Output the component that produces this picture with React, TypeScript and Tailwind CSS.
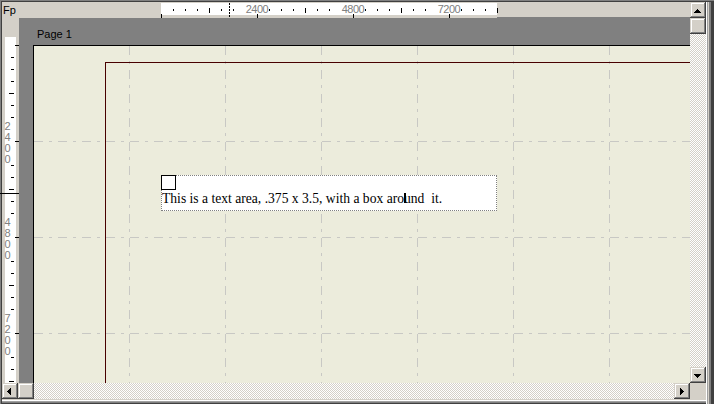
import React from "react";

const bevel =
  "bg-[#d4d0c8] shadow-[inset_-1px_-1px_#404040,inset_1px_1px_#d4d0c8,inset_-2px_-2px_#808080,inset_2px_2px_#ffffff]";
const checker =
  "bg-[image:conic-gradient(#d4d0c8_25%,#ffffff_0_50%,#d4d0c8_0_75%,#ffffff_0)] bg-[length:2px_2px]";

type Dir = "up" | "down" | "left" | "right";

function Arrow({ dir }: { dir: Dir }) {
  const rects: React.ReactNode[] = [];
  for (let r = 0; r < 4; r++) {
    if (dir === "up") rects.push(<rect key={r} x={7 - r} y={7 + r} width={1 + 2 * r} height={1} />);
    if (dir === "down") rects.push(<rect key={r} x={4 + r} y={7 + r} width={7 - 2 * r} height={1} />);
    if (dir === "left") rects.push(<rect key={r} x={5 + r} y={8 - r} width={1} height={1 + 2 * r} />);
    if (dir === "right") rects.push(<rect key={r} x={9 - r} y={8 - r} width={1} height={1 + 2 * r} />);
  }
  return (
    <svg width={16} height={16} className="block" shapeRendering="crispEdges">
      <g fill="#000">{rects}</g>
    </svg>
  );
}

function Btn({ dir }: { dir: Dir }) {
  return (
    <div className={`w-[16px] h-[16px] shrink-0 ${bevel}`}>
      <Arrow dir={dir} />
    </div>
  );
}

function TopRuler() {
  const ticks: React.ReactNode[] = [];
  const labels: { x: number; t: string }[] = [
    { x: 96, t: "2400" },
    { x: 192, t: "4800" },
    { x: 288, t: "7200" },
  ];
  for (let k = -8; k <= 20; k++) {
    const x = 96 + 12 * k;
    if (k % 8 === 0) ticks.push(<rect key={k} x={x} y={12} width={1} height={4} />);
    else if (k % 4 === 0) ticks.push(<rect key={k} x={x} y={6} width={1} height={5} />);
    else if (k === -1 || k === 7 || k === 15) continue;
    else ticks.push(<rect key={k} x={x} y={7} width={1} height={2} />);
  }
  return (
    <div className="relative w-[336px] h-[16px] shrink-0">
      <div className="mt-px h-[12px] bg-white" />
      {labels.map((l) => (
        <span
          key={l.t}
          className="absolute top-[2px] w-[24px] text-center text-[11px] leading-[11px] tracking-[-0.5px] text-[#808080]"
          style={{ left: l.x - 12 }}
        >
          {l.t}
        </span>
      ))}
      <svg
        className="absolute left-0 top-0 overflow-visible"
        width={336}
        height={16}
        shapeRendering="crispEdges"
      >
        <g fill="#000">{ticks}</g>
        <line x1={68.5} y1={1} x2={68.5} y2={16} stroke="#000" strokeDasharray="2 1" />
      </svg>
    </div>
  );
}

function LeftRuler() {
  const ticks: React.ReactNode[] = [];
  const labels = [
    { y: 123, t: "2400" },
    { y: 219, t: "4800" },
    { y: 315, t: "7200" },
  ];
  const skip = [-1, 1, 7, 9, 15, 17];
  for (let k = -8; k <= 20; k++) {
    const y = 123 + 12 * k;
    if (k % 8 === 0) ticks.push(<rect key={k} x={13} y={y} width={4} height={1} />);
    else if (k % 4 === 0) ticks.push(<rect key={k} x={7} y={y} width={5} height={1} />);
    else if (skip.includes(k)) continue;
    else ticks.push(<rect key={k} x={9} y={y} width={3} height={1} />);
  }
  return (
    <div className="relative w-[17px] shrink-0">
      <div className="ml-[3px] mt-[19px] w-[11px] h-[346px] bg-white" />
      {labels.map((l) => (
        <div
          key={l.t}
          className="absolute left-[2px] w-[7px] flex flex-col items-center text-[11px] leading-[11px] text-[#808080]"
          style={{ top: l.y - 20 }}
        >
          {l.t.split("").map((c, i) => (
            <span key={i}>{c}</span>
          ))}
        </div>
      ))}
      <svg
        className="absolute left-0 top-0 overflow-visible"
        width={17}
        height={365}
        shapeRendering="crispEdges"
      >
        <g fill="#000">{ticks}</g>
        <rect x={-2} y={175} width={19} height={1} fill="#000" />
      </svg>
    </div>
  );
}

function Canvas() {
  const vx = [96, 192, 288, 384, 480, 576];
  const hy = [96, 192, 288];
  return (
    <div className="relative flex-1 bg-[#ececdc]">
      <svg className="absolute left-0 top-0" width={657} height={338} shapeRendering="crispEdges">
        {vx.map((x) => (
          <line
            key={"v" + x}
            x1={x + 0.5}
            y1={1}
            x2={x + 0.5}
            y2={338}
            stroke="#c8c8c4"
            strokeDasharray="9 6 3 6"
          />
        ))}
        {hy.map((y) => (
          <line
            key={"h" + y}
            x1={1}
            y1={y + 0.5}
            x2={657}
            y2={y + 0.5}
            stroke="#c8c8c4"
            strokeDasharray="9 6 3 6"
          />
        ))}
        <line x1={72.5} y1={17} x2={72.5} y2={338} stroke="#480000" />
        <line x1={72} y1={17.5} x2={657} y2={17.5} stroke="#480000" />
        <line x1={0} y1={0.5} x2={657} y2={0.5} stroke="#000" />
        <line x1={0.5} y1={0} x2={0.5} y2={338} stroke="#000" />
      </svg>
      <div className="absolute left-[128px] top-[130px] w-[336px] h-[36px] bg-white border border-dotted border-[#808080]">
        <div className="absolute -left-px -top-px w-[15px] h-[15px] border border-black" />
        <div className="absolute left-0 top-[15px] whitespace-pre text-[13.6px] leading-[15px] text-black font-['Liberation_Serif',serif]">
          This is a text area, .375 x 3.5, with a box aro
          <span className="relative">
            <span className="absolute left-0 top-[2px] w-[2px] h-[10px] bg-black" />
          </span>
          und{"  "}it.
        </div>
      </div>
    </div>
  );
}

export default function App() {
  return (
    <div className="w-[714px] h-[404px] overflow-hidden bg-[#d4d0c8] pl-[2px] pt-[2px] pr-[8px] pb-[4px] font-['Liberation_Sans',sans-serif] shadow-[inset_1px_1px_#808080,inset_2px_2px_#404040,inset_-3px_0_#404040,inset_-5px_0_#808080,inset_-6px_0_#d4d0c8,inset_-7px_0_#a0a0a0,inset_-8px_0_#ffffff,inset_0_-1px_#404040,inset_0_-2px_#808080,inset_0_-3px_#a0a0a0,inset_0_-4px_#ffffff]">
      <div className="flex h-[381px]">
        <div className="flex flex-col w-[688px]">
          <div className="flex h-[16px] shrink-0">
            <div className="w-[159px] shrink-0 pl-px pt-[2px] text-[11px] leading-[12px] text-black">Fp</div>
            <TopRuler />
            <div className="flex-1 border-b border-[#808080]" />
          </div>
          <div className="flex flex-1">
            <LeftRuler />
            <div className="flex flex-col flex-1 bg-[#808080] pl-[14px]">
              <div className="h-[27px] shrink-0 pl-[4px] pt-[10px] text-[11px] leading-[13px] text-black">
                Page 1
              </div>
              <Canvas />
            </div>
          </div>
        </div>
        <div className="flex flex-col w-[16px]">
          <Btn dir="up" />
          <div className={`h-[16px] shrink-0 ${bevel}`} />
          <div className={`flex-1 ${checker}`} />
          <Btn dir="down" />
        </div>
      </div>
      <div className="flex h-[16px]">
        <div className="flex w-[688px]">
          <Btn dir="left" />
          <div className={`w-[16px] h-[16px] shrink-0 ${bevel}`} />
          <div className={`flex-1 ${checker}`} />
          <Btn dir="right" />
        </div>
        <div className="w-[16px]" />
      </div>
    </div>
  );
}
